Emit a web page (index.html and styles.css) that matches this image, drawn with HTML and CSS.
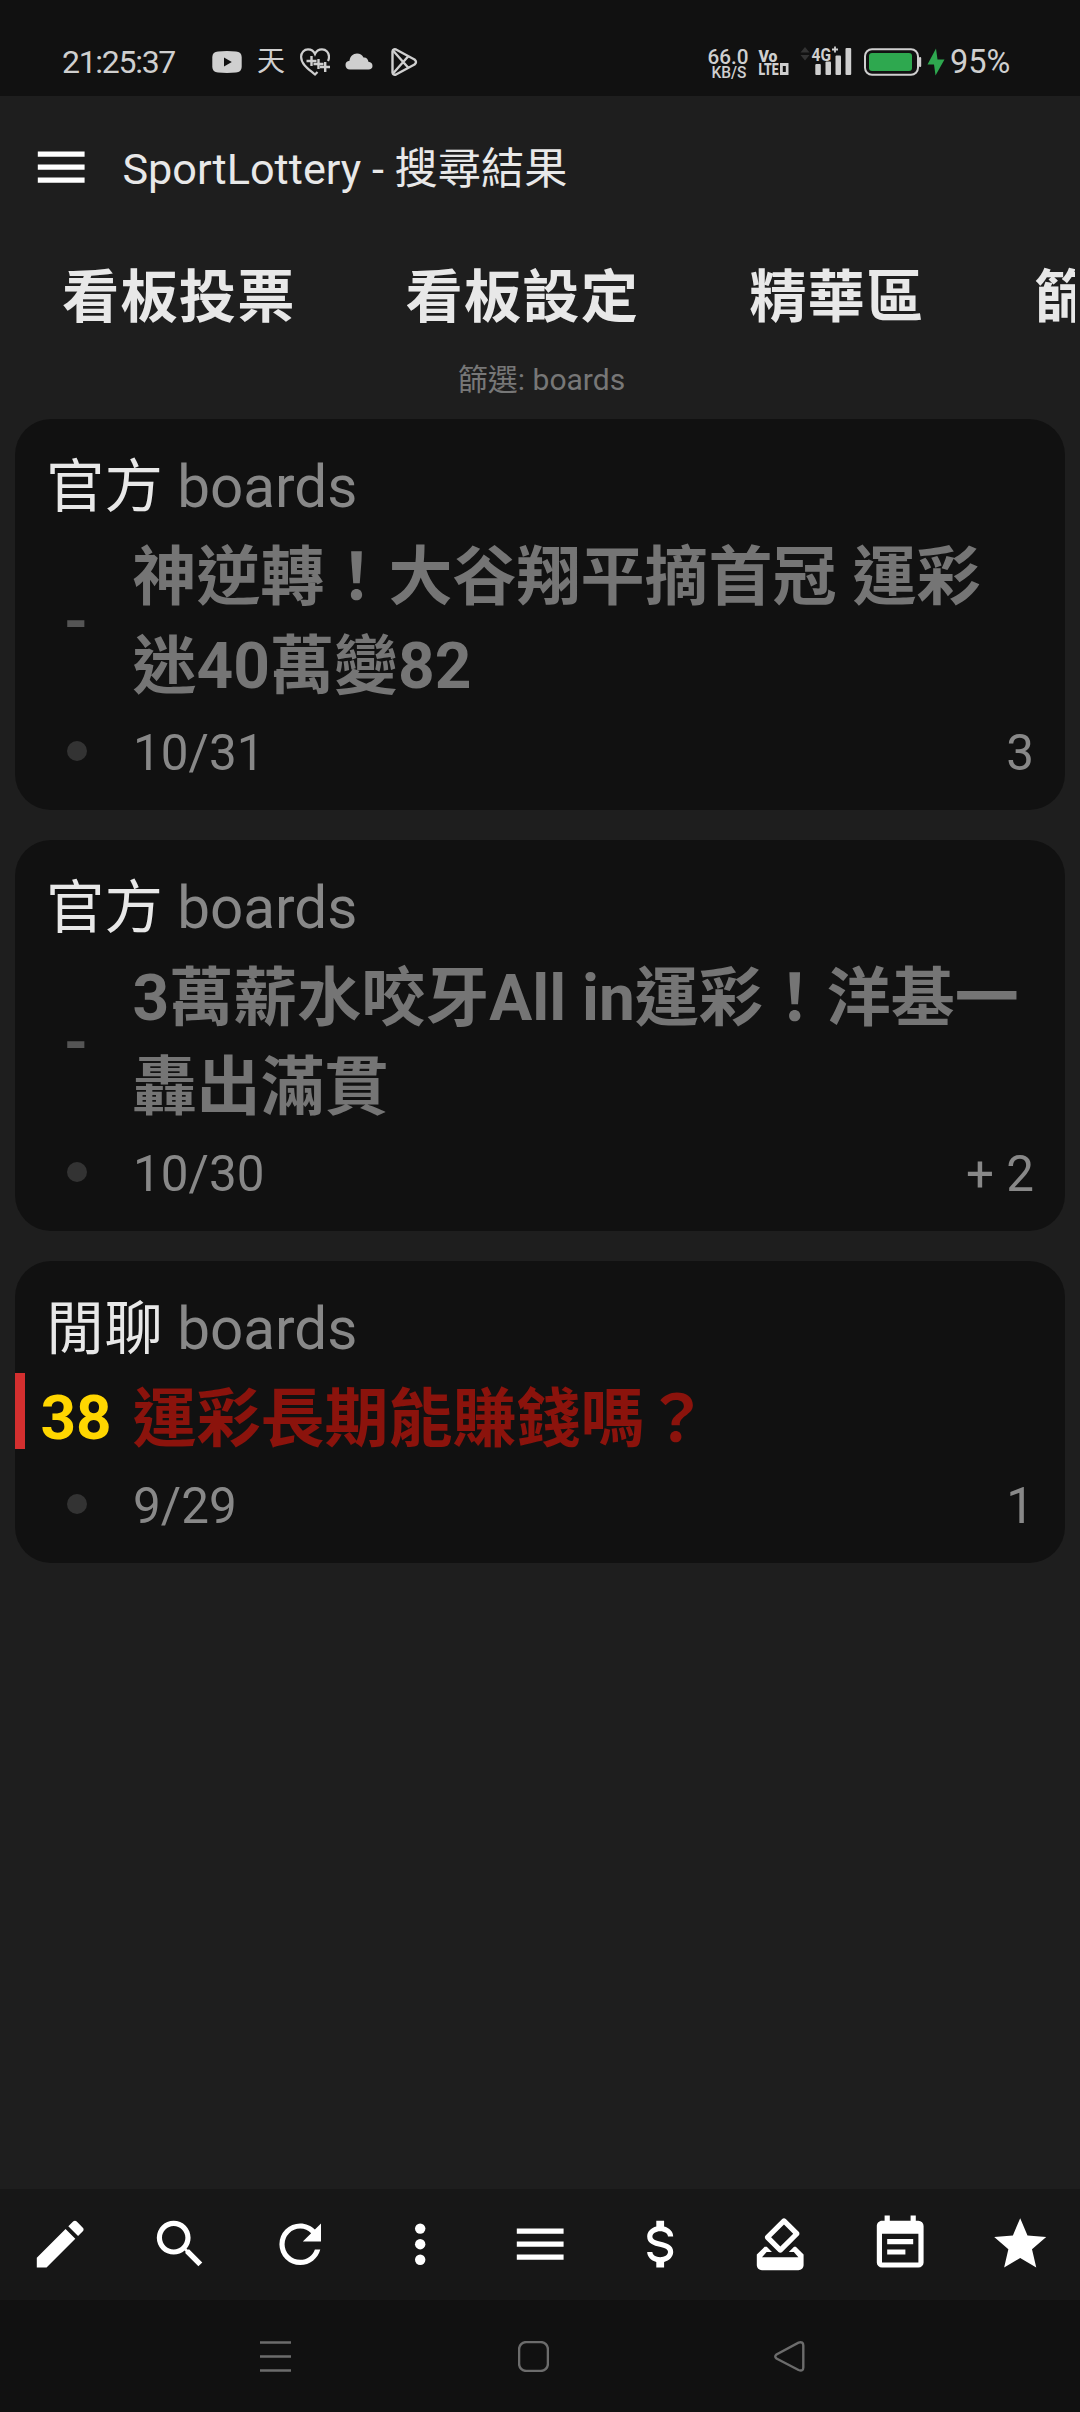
FILE: index.html
```html
<!DOCTYPE html>
<html lang="zh-Hant">
<head>
<meta charset="utf-8">
<title>SportLottery - 搜尋結果</title>
<link rel="stylesheet" href="styles.css">
</head>
<body>
<div class="screen">
  <div class="status">
    <span class="clock">21:25:37</span>
    <svg class="st-youtube" width="30" height="22" viewBox="0 0 30 22"><path fill="#cfcfcf" fill-rule="evenodd" d="M6 .6Q15-.4 24 .6Q29.500 1 29.700 6V16Q29.500 21 24 21.500Q15 22.400 6 21.500Q.500 21 .300 16V6Q.500 1 6 .6ZM12 6.500V15.500L19.800 11Z"/></svg>
    <span class="st-tian">天</span>
    <svg class="st-heart" width="30" height="28" viewBox="0 0 30 28" fill="none" stroke="#cfcfcf" stroke-width="2.200"><path d="M17.500 24L15 26.500C10 22 1.100 17 1.100 8.800C1.100 4.500 4.200 1.300 8 1.300C11 1.300 13.700 3 15 6C16.300 3 19 1.300 22 1.300C26 1.300 29 4.500 29 8.800Q29 11 28 13"/><path d="M11.500 8v10M6.500 13h10M18.500 11v10M13.500 16h10M25.200 14v10M20 19h10" stroke-width="2.400"/></svg>
    <svg class="st-cloud" width="28" height="17" viewBox="0 0 28 17"><path fill="#cfcfcf" d="M5 16.500C2 16.500.500 14.500.500 12C.500 9.500 2 8 4.500 7.700C5 3.500 8 .500 12 .500C15 .500 17.300 2 18.500 4.500C21 4 23.300 6 23.400 8.800C26 9 27.500 10.500 27.500 13C27.500 15.200 26 16.500 23.500 16.500Z"/></svg>
    <svg class="st-play" width="27" height="28" viewBox="0 0 27 28" fill="none" stroke="#cfcfcf" stroke-width="2.400" stroke-linejoin="round"><path d="M1.500 3.500Q2 .500 5 1.500L23.500 11.500Q26.500 14 23.500 16.500L5 26.500Q2 27.500 1.500 24.500Z"/><path d="M2 2.500L17.500 20M2 25.500L17.500 8"/></svg>
    <svg class="st-net" width="240" height="36" viewBox="706 44 240 36">
      <g fill="#cfcfcf" font-family="Roboto, sans-serif">
        <text x="707.500" y="63.500" font-size="20.500" font-weight="500" textLength="41" lengthAdjust="spacingAndGlyphs">66.0</text>
        <text x="711.500" y="77.500" font-size="16.500" font-weight="500" textLength="35" lengthAdjust="spacingAndGlyphs">KB/S</text>
        <text x="758.500" y="61.700" font-size="17" font-weight="900" textLength="19" lengthAdjust="spacingAndGlyphs">Vo</text>
        <text x="758.500" y="75" font-size="16.500" font-weight="900" textLength="20" lengthAdjust="spacingAndGlyphs">LTE</text>
        <path fill-rule="evenodd" d="M780 63h8.500v12H780zM782.800 66v6h3v-6z"/>
        <text x="811.500" y="60.500" font-size="18.500" font-weight="700" textLength="19.500" lengthAdjust="spacingAndGlyphs">4G</text>
        <path d="M832 49.500h6M835 46.500v6" stroke="#cfcfcf" stroke-width="1.800"/>
        <rect x="815.300" y="64" width="5.500" height="11" rx="1"/>
        <rect x="825.500" y="61.500" width="5.500" height="13.500" rx="1"/>
        <rect x="835.500" y="55.500" width="5.500" height="19.500" rx="1"/>
        <rect x="845.500" y="48" width="5.700" height="27" rx="1"/>
        <rect x="919" y="57" width="2.200" height="10" rx="1"/>
      </g>
      <path fill="#333" d="M800.500 52.500L805 47L809.500 52.500ZM800.500 55H809.500L805 60.500Z"/>
      <rect x="865" y="49.200" width="53" height="25.600" rx="7" fill="none" stroke="#cfcfcf" stroke-width="2"/>
      <rect x="869" y="53" width="43" height="18" rx="3" fill="#2ea84f"/>
      <path fill="#2ea84f" d="M936 48.500L927.500 64.500H934L935.500 75.500L944.500 59.500H937.500Z"/>
    </svg>
    <span class="battery">95%</span>
  </div>

  <header class="appbar">
    <svg class="icon" viewBox="0 0 24 24"><path d="M3,6H21V8H3V6M3,11H21V13H3V11M3,16H21V18H3V16Z"/></svg>
    <h1>SportLottery - 搜尋結果</h1>
  </header>

  <nav class="tabs">
    <span>看板投票</span><span>看板設定</span><span>精華區</span><span>篩選</span>
  </nav>
  <p class="filter">篩選: boards</p>

  <main class="list">
    <article class="card">
      <div class="category">官方 <em>boards</em></div>
      <div class="row">
        <span class="score">-</span>
        <h2>神逆轉！大谷翔平摘首冠 運彩<br>迷40萬變82</h2>
      </div>
      <div class="meta"><i class="dot"></i><time>10/31</time><span class="count">3</span></div>
    </article>
    <article class="card">
      <div class="category">官方 <em>boards</em></div>
      <div class="row">
        <span class="score">-</span>
        <h2>3萬薪水咬牙All in運彩！洋基一<br>轟出滿貫</h2>
      </div>
      <div class="meta"><i class="dot"></i><time>10/30</time><span class="count">+ 2</span></div>
    </article>
    <article class="card">
      <div class="category">閒聊 <em>boards</em></div>
      <div class="row marked">
        <span class="score hot">38</span>
        <h2>運彩長期能賺錢嗎？</h2>
      </div>
      <div class="meta"><i class="dot"></i><time>9/29</time><span class="count">1</span></div>
    </article>
  </main>

  <footer class="toolbar">
    <svg class="icon" viewBox="0 0 24 24"><path d="M20.710,7.040C21.100,6.650 21.100,6 20.710,5.630L18.370,3.290C18,2.900 17.350,2.900 16.960,3.290L15.120,5.120L18.870,8.870M3,17.250V21H6.750L17.810,9.930L14.060,6.180L3,17.250Z"/></svg>
    <svg class="icon" viewBox="0 0 24 24"><path d="M9.500,3A6.500,6.500 0 0,1 16,9.500C16,11.110 15.410,12.590 14.440,13.730L14.710,14H15.500L20.500,19L19,20.500L14,15.500V14.710L13.730,14.440C12.590,15.410 11.110,16 9.500,16A6.500,6.500 0 0,1 3,9.500A6.500,6.500 0 0,1 9.500,3M9.500,5C7,5 5,7 5,9.500C5,12 7,14 9.500,14C12,14 14,12 14,9.500C14,7 12,5 9.500,5Z"/></svg>
    <svg class="icon" viewBox="0 0 24 24"><path d="M17.650,6.350C16.200,4.900 14.210,4 12,4A8,8 0 0,0 4,12A8,8 0 0,0 12,20C15.730,20 18.840,17.450 19.730,14H17.650C16.830,16.330 14.610,18 12,18A6,6 0 0,1 6,12A6,6 0 0,1 12,6C13.660,6 15.140,6.690 16.220,7.780L13,11H20V4L17.650,6.350Z"/></svg>
    <svg class="icon" viewBox="0 0 24 24"><circle cx="12" cy="6" r="2"/><circle cx="12" cy="12" r="2"/><circle cx="12" cy="18" r="2"/></svg>
    <svg class="icon" viewBox="0 0 24 24"><path d="M3,6H21V8H3V6M3,11H21V13H3V11M3,16H21V18H3V16Z"/></svg>
    <svg class="icon" viewBox="0 0 24 24"><path d="M7,15H9C9,16.080 10.370,17 12,17C13.630,17 15,16.080 15,15C15,13.900 13.960,13.500 11.760,12.970C9.640,12.440 7,11.780 7,9C7,7.210 8.470,5.690 10.500,5.180V3H13.500V5.180C15.530,5.690 17,7.210 17,9H15C15,7.920 13.630,7 12,7C10.370,7 9,7.920 9,9C9,10.100 10.040,10.500 12.240,11.030C14.360,11.560 17,12.220 17,15C17,16.790 15.530,18.310 13.500,18.820V21H10.500V18.820C8.470,18.310 7,16.790 7,15Z"/></svg>
    <svg class="icon" viewBox="0 0 24 24"><path d="M18 13h-.68l-2 2h1.910L19 17H5l1.780-2h2.050l-2-2H6l-3 3v4c0 1.100.89 2 1.990 2H19c1.100 0 2-.89 2-2v-4l-3-3zm-1-5.050l-4.950 4.950-3.540-3.540 4.950-4.950L17 7.950zm-4.240-5.660L6.390 8.660c-.39.39-.39 1.020 0 1.410l4.950 4.950c.39.39 1.020.39 1.410 0l6.360-6.360c.39-.39.39-1.020 0-1.410L14.160 2.300c-.38-.4-1.010-.4-1.400-.01z"/></svg>
    <svg class="icon" viewBox="0 0 24 24"><path d="M14,14H7V16H14M19,19H5V8H19M19,3H18V1H16V3H8V1H6V3H5C3.890,3 3,3.900 3,5V19A2,2 0 0,0 5,21H19A2,2 0 0,0 21,19V5A2,2 0 0,0 19,3M17,10H7V12H17V10Z"/></svg>
    <svg class="icon" viewBox="0 0 24 24"><path d="M12,17.270L18.180,21L16.540,13.970L22,9.240L14.810,8.620L12,2L9.190,8.620L2,9.240L7.450,13.970L5.820,21L12,17.270Z"/></svg>
  </footer>

  <div class="sysnav">
    <svg class="nav-recent" width="31" height="31" viewBox="0 0 31 31"><path d="M0 1.500H31M0 15.500H31M0 29.500H31"/></svg>
    <svg class="nav-home" width="31" height="31" viewBox="0 0 31 31"><rect x="1.100" y="1.100" width="28.800" height="28.800" rx="7"/></svg>
    <svg class="nav-back" width="31" height="31" viewBox="0 0 31 31"><path d="M24.500 1.600Q29.300 .2 29.300 4.500V26.500Q29.300 30.800 24.500 29L2.500 17.500Q0 15.500 2.500 13.500Z"/></svg>
  </div>
</div>
</body>
</html>
```
FILE: styles.css
```css
* { box-sizing: border-box; }

body {
  margin: 0;
  background: #1e1e1e;
  font-family: Roboto, "Noto Sans CJK TC", sans-serif;
}

.screen {
  width: 1080px;
  height: 2412px;
  display: flex;
  flex-direction: column;
  overflow: hidden;
}

.icon {
  width: 62.4px;
  height: 62.4px;
  fill: #fff;
  flex: none;
}

/* status bar */
.status {
  height: 96px;
  flex: none;
  display: flex;
  align-items: flex-start;
  background: #111;
  color: #cfcfcf;
}
.status svg { flex: none; display: block; }
.status span { white-space: nowrap; }
.clock {
  width: 114px;
  margin: 42px 0 0 62px;
  font-size: 32px;
  line-height: 40px;
  letter-spacing: -1.3px;
}
.st-youtube { margin: 51px 0 0 36px; }
.st-tian {
  width: 29px;
  margin: 44px 0 0 15px;
  font-size: 28px;
  line-height: 35px;
}
.st-heart { margin: 48px 0 0 14px; }
.st-cloud { margin: 53px 0 0 15px; }
.st-play { margin: 48px 0 0 18px; }
.st-net { margin: 44px 0 0 288px; }
.battery {
  margin: 42px 0 0 4px;
  font-size: 32.5px;
  line-height: 40px;
}

/* app bar */
.appbar {
  height: 146px;
  flex: none;
  display: flex;
  align-items: center;
  padding: 0 0 3px 30px;
}
.appbar h1 {
  margin: 4px 0 0 30px;
  font-size: 43.2px;
  line-height: 50px;
  font-weight: 400;
  color: #e8e8e8;
  white-space: nowrap;
}

.tabs {
  height: 115px;
  flex: none;
  display: flex;
  gap: 110px;
  margin: 0 5px;
  padding-left: 57px;
  overflow: hidden;
  white-space: nowrap;
  font-size: 57.2px;
  line-height: 112px;
  font-weight: 700;
  letter-spacing: 1.2px;
  color: #e8e8e8;
}
.tabs span { flex: none; }

.filter {
  margin: 0 0 17px;
  padding-left: 3px;
  font-size: 30px;
  line-height: 45px;
  text-align: center;
  color: #777;
}

/* result cards */
.list {
  flex: 1;
  display: flex;
  flex-direction: column;
  gap: 30px;
  padding: 0 15px;
}
.card {
  padding: 32px 0 13px;
  border-radius: 36px;
  background: #111;
}
.category {
  height: 80px;
  padding-left: 31px;
  font-size: 58.4px;
  line-height: 73px;
  color: #e8e8e8;
  white-space: nowrap;
}
.category em { font-style: normal; color: #888; }

.row { display: flex; align-items: center; }
.marked {
  background: linear-gradient(#d32f2f, #d32f2f) 0 0 / 10px 76px no-repeat;
}
.score {
  width: 122px;
  flex: none;
  text-align: center;
  font-size: 62px;
  line-height: 89px;
  font-weight: 700;
  color: #555;
}
.hot { color: #ffd600; }
.row h2 {
  margin: 0 0 0 -4.5px;
  padding-top: 2px;
  height: 178px;
  font-size: 64px;
  line-height: 89px;
  font-weight: 700;
  color: #757575;
  white-space: nowrap;
}
.marked h2 { height: 89px; color: #8b130c; }

.meta {
  height: 88px;
  display: flex;
  align-items: center;
  padding-right: 31px;
  font-size: 49.4px;
  line-height: 88px;
  color: #888;
}
.dot {
  width: 20px;
  height: 20px;
  margin: 0 46px 4px 52px;
  border-radius: 50%;
  background: #333;
}
.count { margin-left: auto; }

/* bottom bars */
.toolbar {
  height: 111px;
  flex: none;
  display: grid;
  grid-template-columns: repeat(9, 120px);
  place-items: center;
  background: #171717;
}
.sysnav {
  height: 112px;
  flex: none;
  display: flex;
  padding: 41px 0 0 260px;
  background: #111;
}
.sysnav svg { fill: none; stroke: #6c6c6c; stroke-width: 2.4; }
.nav-home { margin-left: 227px; }
.nav-back { margin-left: 225px; }
```
